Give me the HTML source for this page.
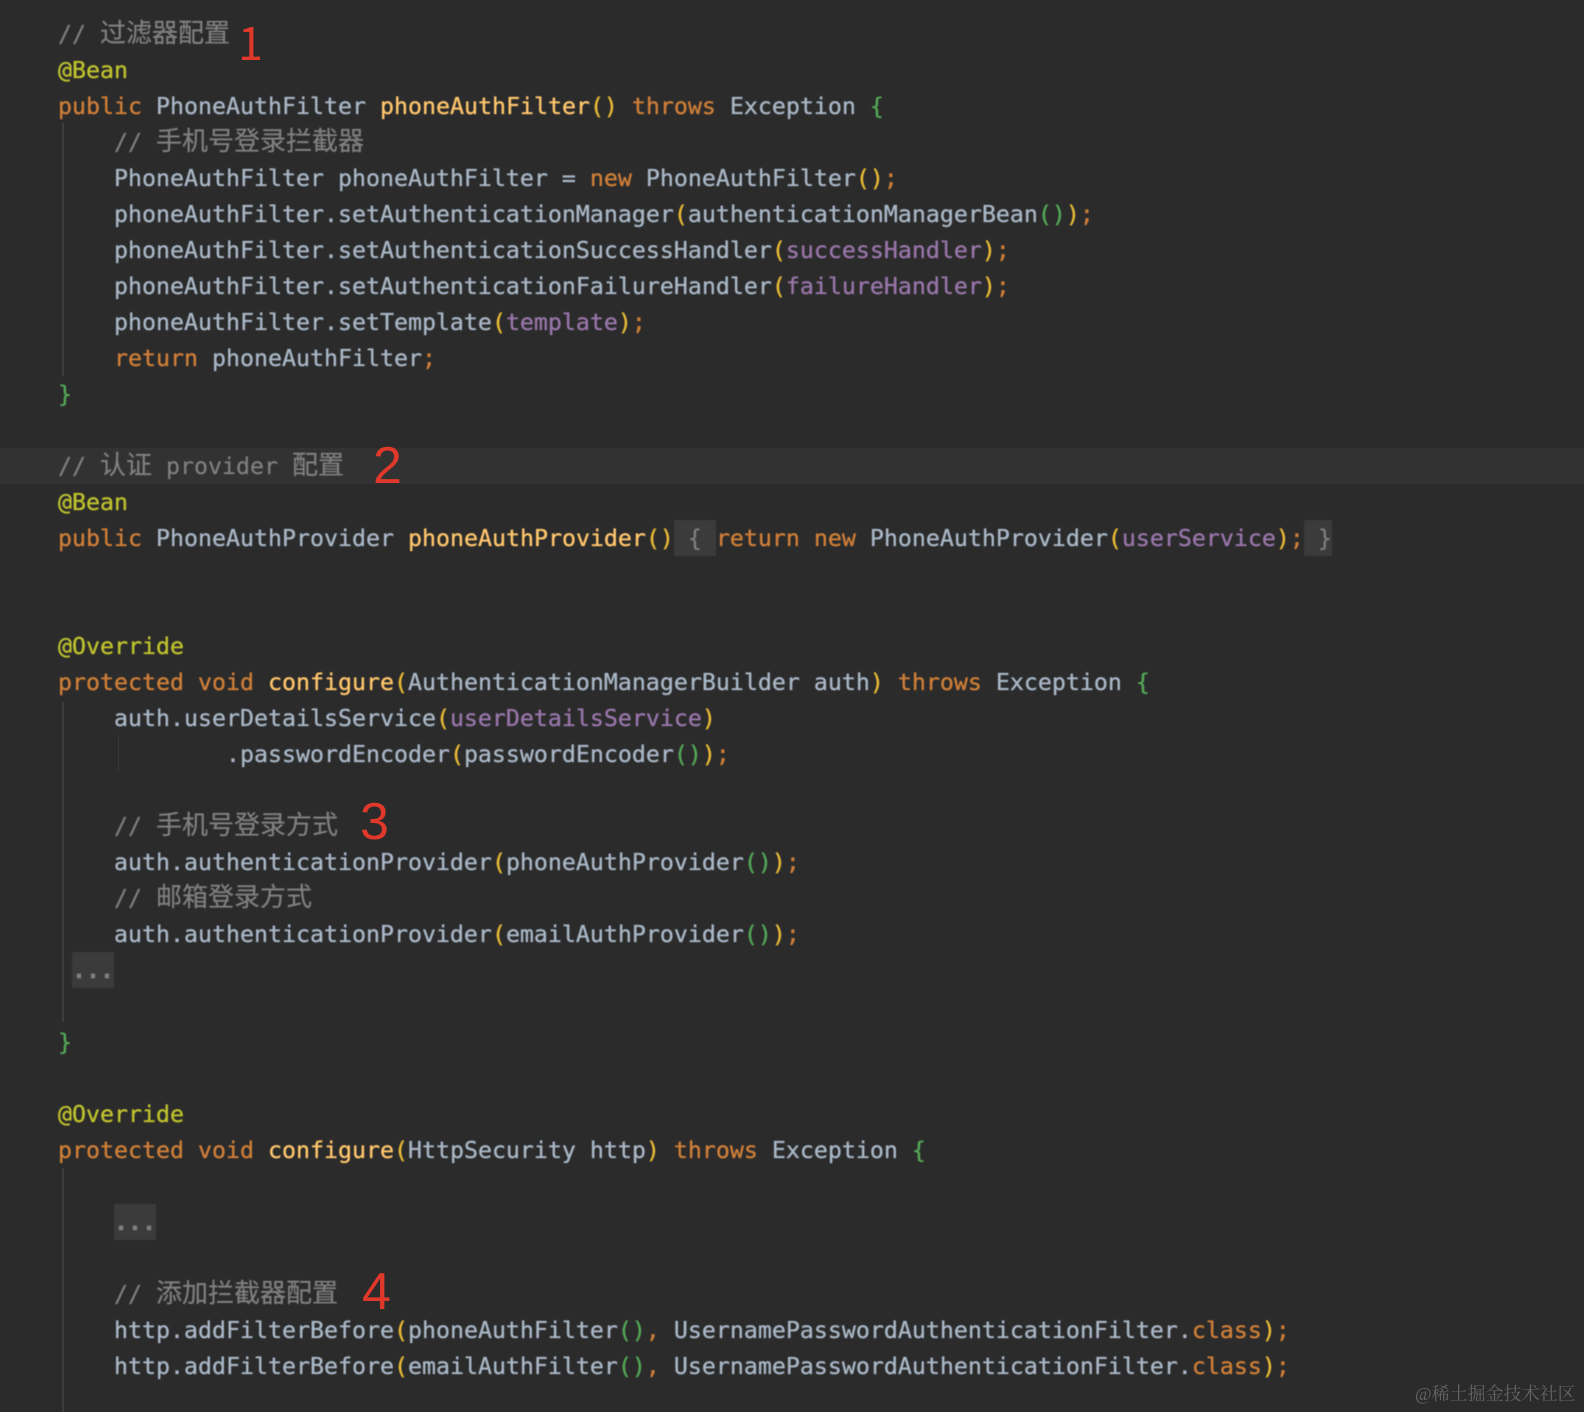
<!DOCTYPE html>
<html lang="zh">
<head>
<meta charset="utf-8">
<title>code</title>
<style>
html,body{margin:0;padding:0;background:#2b2b2b;width:1584px;height:1412px;overflow:hidden;}
#page{position:relative;width:1584px;height:1412px;overflow:hidden;background:#2b2b2b;}
#hl{position:absolute;left:0;top:448px;width:1584px;height:36px;background:#323232;}
.g{position:absolute;width:2px;background:#3b3e3b;}
#code{position:absolute;left:58px;top:17px;font-family:"DejaVu Sans Mono","Liberation Mono",monospace;font-size:23.25px;color:#a9b7c6;filter:blur(.4px);-webkit-text-stroke:.35px;}
.l{height:36px;line-height:36px;white-space:pre;}
.c{color:#808080;-webkit-text-stroke:.2px}
.z{font-family:"Noto Sans CJK SC","WenQuanYi Zen Hei",sans-serif;font-size:26px;line-height:26px;}
.a{color:#bfc22e}
.k{color:#cf7f38}
.m{color:#ffc66d}
.f{color:#9876aa}
.y{color:#e8ba36}
.n{color:#54a857}
.b{background:#3b3b3b;display:inline-block;height:36px;line-height:38px;vertical-align:top;position:relative;top:-1px;color:#808080;-webkit-text-stroke:.2px}
.d{font-weight:bold;-webkit-text-stroke:.5px}
.r{position:absolute;font-family:"Liberation Sans",sans-serif;font-size:52px;line-height:52px;color:#e0392b;}
#wm{position:absolute;left:1415px;top:1382px;font-family:"Liberation Serif","Noto Serif CJK SC",serif;font-size:18px;line-height:24px;color:#636363;white-space:nowrap;}
</style>
</head>
<body>
<div id="page">
<div id="hl"></div>
<div class="g" style="left:62px;top:123px;height:253px"></div>
<div class="g" style="left:62px;top:702px;height:320px"></div>
<div class="g" style="left:62px;top:1168px;height:244px"></div>
<div class="g" style="left:118px;top:735px;height:37px;width:1px;background:#383838"></div>
<div id="code">
<div class="l c">// <span class="z">过滤器配置</span></div>
<div class="l a">@Bean</div>
<div class="l"><span class="k">public</span> PhoneAuthFilter <span class="m">phoneAuthFilter</span><span class="y">()</span> <span class="k">throws</span> Exception <span class="n">{</span></div>
<div class="l c">    // <span class="z">手机号登录拦截器</span></div>
<div class="l">    PhoneAuthFilter phoneAuthFilter = <span class="k">new</span> PhoneAuthFilter<span class="y">()</span><span class="k">;</span></div>
<div class="l">    phoneAuthFilter.setAuthenticationManager<span class="y">(</span>authenticationManagerBean<span class="n">()</span><span class="y">)</span><span class="k">;</span></div>
<div class="l">    phoneAuthFilter.setAuthenticationSuccessHandler<span class="y">(</span><span class="f">successHandler</span><span class="y">)</span><span class="k">;</span></div>
<div class="l">    phoneAuthFilter.setAuthenticationFailureHandler<span class="y">(</span><span class="f">failureHandler</span><span class="y">)</span><span class="k">;</span></div>
<div class="l">    phoneAuthFilter.setTemplate<span class="y">(</span><span class="f">template</span><span class="y">)</span><span class="k">;</span></div>
<div class="l">    <span class="k">return</span> phoneAuthFilter<span class="k">;</span></div>
<div class="l n">}</div>
<div class="l"></div>
<div class="l c">// <span class="z">认证</span> provider <span class="z">配置</span></div>
<div class="l a">@Bean</div>
<div class="l"><span class="k">public</span> PhoneAuthProvider <span class="m">phoneAuthProvider</span><span class="y">()</span><span class="b"> { </span><span class="k">return new</span> PhoneAuthProvider<span class="y">(</span><span class="f">userService</span><span class="y">)</span><span class="k">;</span><span class="b"> }</span></div>
<div class="l"></div>
<div class="l"></div>
<div class="l a">@Override</div>
<div class="l"><span class="k">protected void</span> <span class="m">configure</span><span class="y">(</span>AuthenticationManagerBuilder auth<span class="y">)</span> <span class="k">throws</span> Exception <span class="n">{</span></div>
<div class="l">    auth.userDetailsService<span class="y">(</span><span class="f">userDetailsService</span><span class="y">)</span></div>
<div class="l">            .passwordEncoder<span class="y">(</span>passwordEncoder<span class="n">()</span><span class="y">)</span><span class="k">;</span></div>
<div class="l"></div>
<div class="l c">    // <span class="z">手机号登录方式</span></div>
<div class="l">    auth.authenticationProvider<span class="y">(</span>phoneAuthProvider<span class="n">()</span><span class="y">)</span><span class="k">;</span></div>
<div class="l c">    // <span class="z">邮箱登录方式</span></div>
<div class="l">    auth.authenticationProvider<span class="y">(</span>emailAuthProvider<span class="n">()</span><span class="y">)</span><span class="k">;</span></div>
<div class="l"> <span class="b d">...</span></div>
<div class="l"></div>
<div class="l n">}</div>
<div class="l"></div>
<div class="l a">@Override</div>
<div class="l"><span class="k">protected void</span> <span class="m">configure</span><span class="y">(</span>HttpSecurity http<span class="y">)</span> <span class="k">throws</span> Exception <span class="n">{</span></div>
<div class="l"></div>
<div class="l">    <span class="b d">...</span></div>
<div class="l"></div>
<div class="l c">    // <span class="z">添加拦截器配置</span></div>
<div class="l">    http.addFilterBefore<span class="y">(</span>phoneAuthFilter<span class="n">()</span><span class="k">,</span> UsernamePasswordAuthenticationFilter.<span class="k">class</span><span class="y">)</span><span class="k">;</span></div>
<div class="l">    http.addFilterBefore<span class="y">(</span>emailAuthFilter<span class="n">()</span><span class="k">,</span> UsernamePasswordAuthenticationFilter.<span class="k">class</span><span class="y">)</span><span class="k">;</span></div>
</div>
<div class="r" style="left:238px;top:18px;font-family:'Noto Sans CJK SC',sans-serif;font-size:45px;line-height:45px">1</div>
<div class="r" style="left:373px;top:440px">2</div>
<div class="r" style="left:360px;top:796px">3</div>
<div class="r" style="left:362px;top:1266px">4</div>
<div id="wm">@稀土掘金技术社区</div>
</div>
</body>
</html>
